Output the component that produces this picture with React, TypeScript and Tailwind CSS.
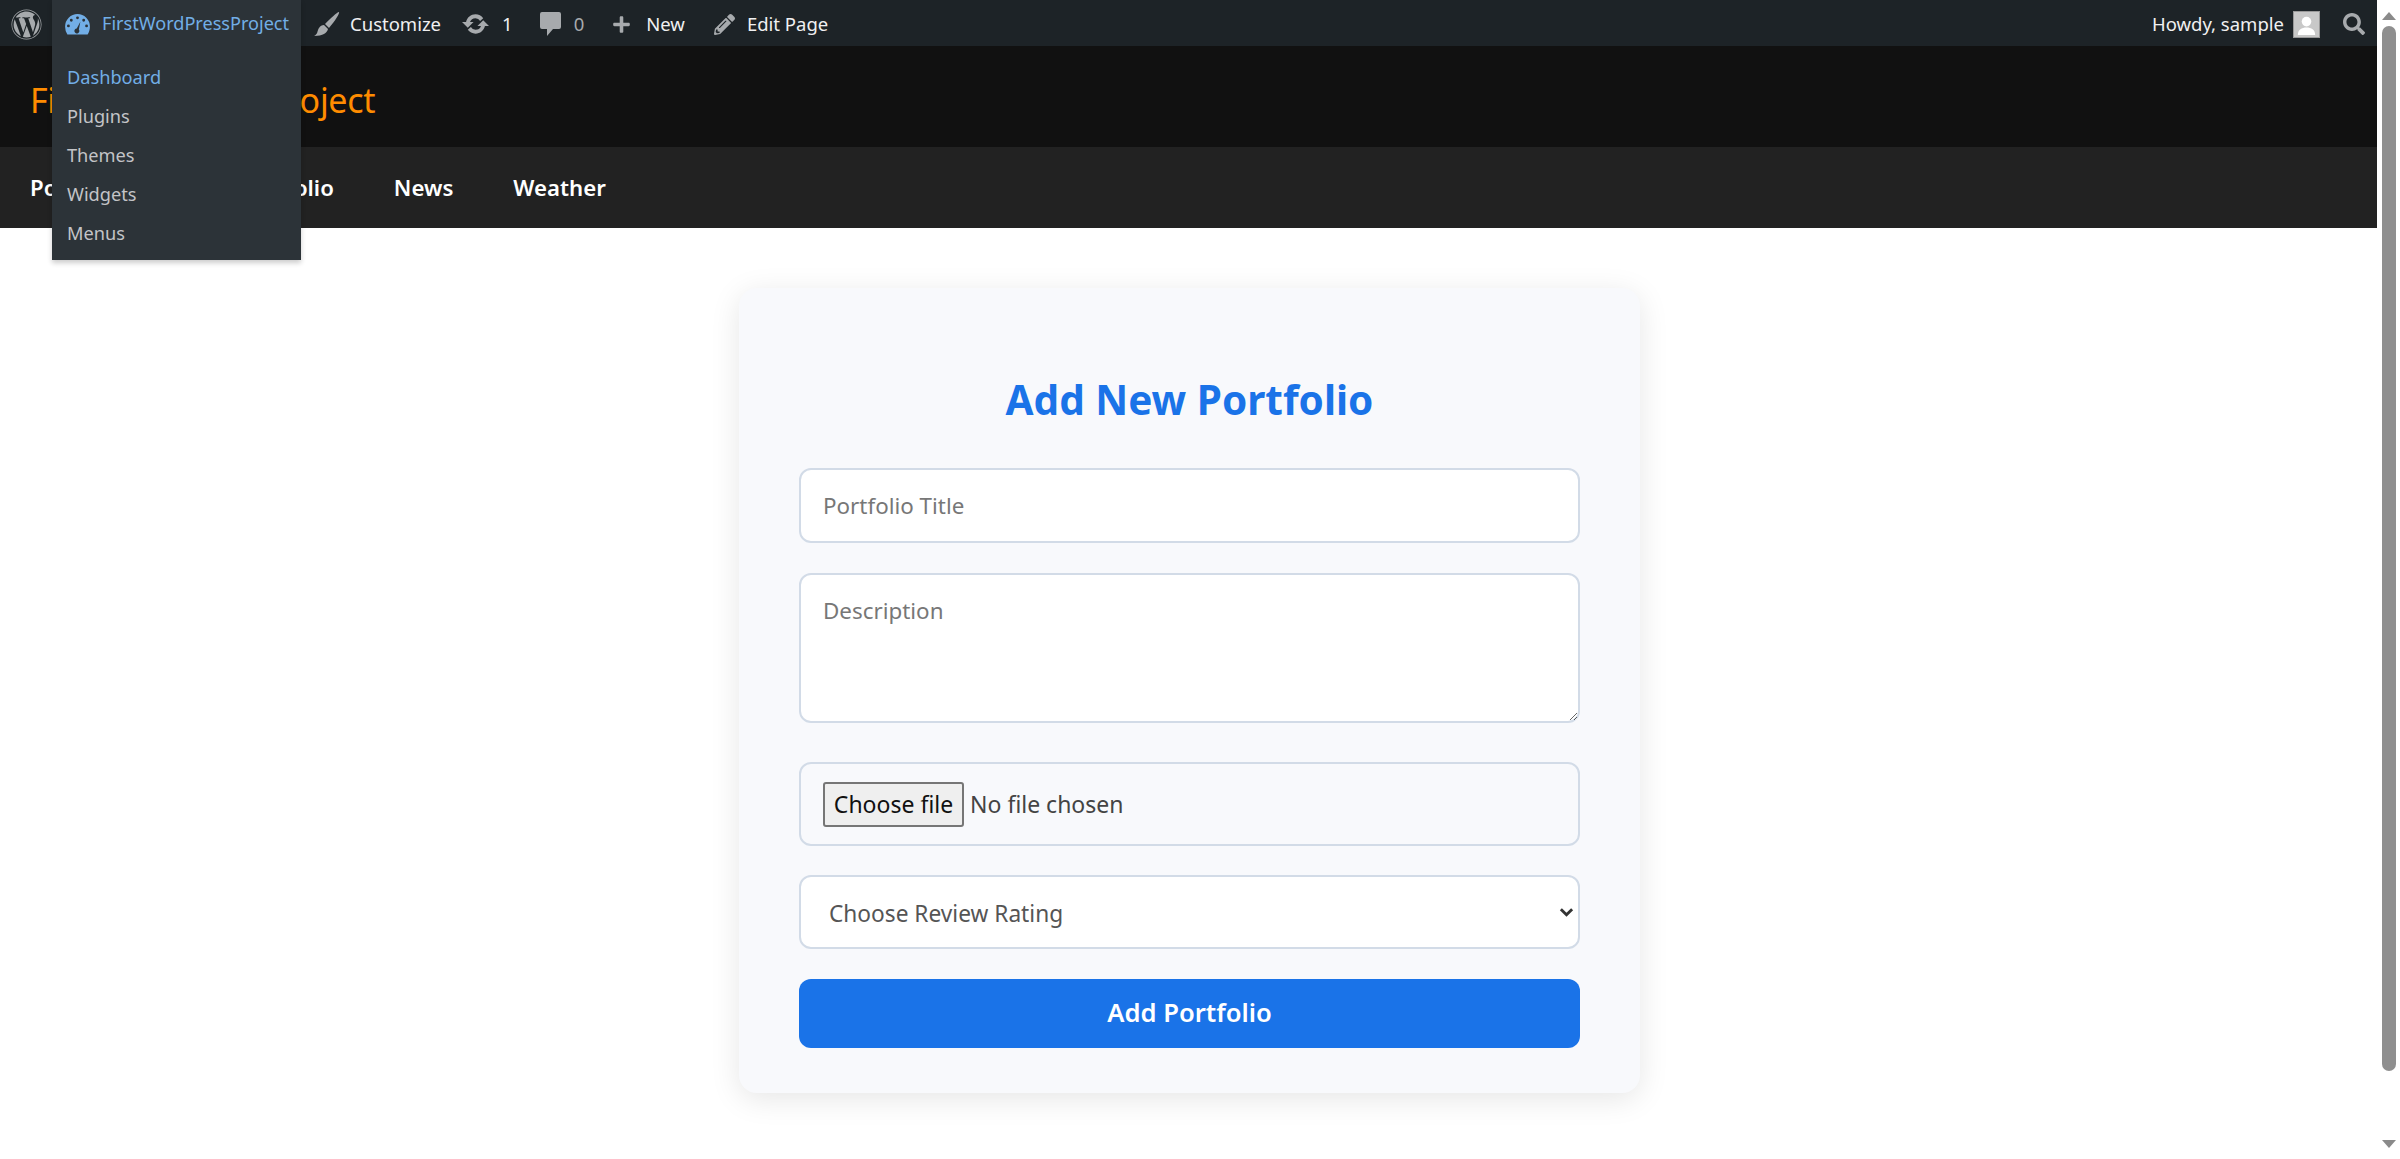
import { FaWordpress, FaSearch, FaPencilAlt, FaPlus } from "react-icons/fa";

const font = "font-['Noto_Sans','Open_Sans',sans-serif]";

const subMenu = ["Dashboard", "Plugins", "Themes", "Widgets", "Menus"];

const GaugeIcon = () => (
  <svg viewBox="0 0 26 22" className="w-[25px] h-[21px]">
    <path
      fill="#72aee6"
      fillRule="evenodd"
      d="M13 0a13 13 0 0 1 13 13c0 3-.8 6-2.4 8.500h-21.200A15 15 0 0 1 0 13 13 13 0 0 1 13 0zM13 2.500a1.500 1.500 0 1 0 0 3 1.500 1.500 0 0 0 0-3zM6.500 5a1.500 1.500 0 1 0 0 3 1.500 1.500 0 0 0 0-3zM19.500 5a1.500 1.500 0 1 0 0 3 1.500 1.500 0 0 0 0-3zM3.500 11a1.500 1.500 0 1 0 0 3 1.500 1.500 0 0 0 0-3zM22.500 11a1.500 1.500 0 1 0 0 3 1.500 1.500 0 0 0 0-3zM16 8l-3.800 7.200a2.600 2.600 0 1 0 2.200 1z"
    />
  </svg>
);

const BrushIcon = () => (
  <svg viewBox="0 0 27 26" className="w-[27px] h-[26px]">
    <path fill="#a7aaad" d="M26 1c1 1-4 9-10 16l-4-4C17 8 24 1 26 1zM11 14l4 4c-1 4-5 7-14 7 4-2 3-5 5-8 1-2 3-3 5-3z" />
  </svg>
);

const UpdateIcon = () => (
  <svg viewBox="0 0 28 22" className="w-[27px] h-[22px]">
    <path
      fill="#a7aaad"
      d="M14 1c3.300 0 6.200 1.600 8 4l-3.200 3a6 6 0 0 0-4.800-3 6 6 0 0 0-5.700 4H12l-6 6-6-6h4.200C5.200 4.500 9.200 1 14 1zM22 7l6 6h-4.200C22.800 17.500 18.800 21 14 21c-3.300 0-6.200-1.600-8-4l3.200-3a6 6 0 0 0 4.800 3 6 6 0 0 0 5.700-4H16z"
    />
  </svg>
);

const CommentIcon = () => (
  <svg viewBox="0 0 21 24" className="w-[21px] h-[24px]">
    <path fill="#a7aaad" d="M2 0h17a2 2 0 0 1 2 2v13a2 2 0 0 1-2 2h-6l-6 7v-7H2a2 2 0 0 1-2-2V2a2 2 0 0 1 2-2z" />
  </svg>
);

const AdminBar = () => (
  <div className="relative z-10 h-[46px] pt-[2px] bg-[#1d2327] flex items-center text-[18.500px] text-[#f0f0f1]">
    <div className="w-[52px] flex justify-center">
      <FaWordpress className="w-[31px] h-[31px] text-[#a7aaad]" />
    </div>

    {/* site menu, open */}
    <div className="absolute left-[52px] top-0 w-[249px] bg-[#2c3338] shadow-[0_3px_5px_rgba(0,0,0,0.2)]">
      <div className="h-[46px] pt-[2px] flex items-center pl-[13px] gap-[12px] text-[18.100px] text-[#72aee6]">
        <GaugeIcon />
        <span>FirstWordPressProject</span>
      </div>
      <ul className="pt-[12px] pb-[7px]">
        {subMenu.map((item, i) => (
          <li
            key={item}
            className={`h-[39px] flex items-center pl-[15px] text-[18.200px] ${i === 0 ? "text-[#72aee6]" : "text-[#c3c4c7]"}`}
          >
            {item}
          </li>
        ))}
      </ul>
    </div>

    <div className="ml-[261px] flex items-center">
      <BrushIcon />
      <span className="ml-[10px]">Customize</span>
      <span className="ml-[21px]"><UpdateIcon /></span>
      <span className="ml-[13px]">1</span>
      <span className="ml-[27px]"><CommentIcon /></span>
      <span className="ml-[13px] text-[#a7aaad]">0</span>
      <FaPlus className="ml-[28px] w-[19px] h-[19px] text-[#a7aaad]" />
      <span className="ml-[15px]">New</span>
      <FaPencilAlt className="ml-[29px] w-[21px] h-[21px] text-[#a7aaad]" />
      <span className="ml-[12px]">Edit Page</span>
    </div>

    <div className="ml-auto flex items-center">
      <span>Howdy, sample</span>
      <div className="ml-[9px] w-[27px] h-[27px] bg-[#c8c8c8] border border-[#999] flex items-end justify-center overflow-hidden">
        <svg viewBox="0 0 26 26" className="w-[25px] h-[25px]">
          <circle cx="13" cy="10" r="5" fill="#fff" />
          <path fill="#fff" d="M4 24c0-6 4-8 9-8s9 2 9 8z" />
        </svg>
      </div>
      <FaSearch className="ml-[23px] mr-[12px] w-[22px] h-[22px] text-[#a7aaad]" />
    </div>
  </div>
);

const Scrollbar = () => (
  <div className="w-[23px] h-full bg-white flex flex-col items-center">
    <div className="mt-[12px] w-0 h-0 border-x-[7px] border-x-transparent border-b-[8px] border-b-[#8a8a8a]" />
    <div className="mt-[6px] h-[1045px] w-[14px] rounded-full bg-[#8f8f8f]" />
    <div className="mt-[69px] w-0 h-0 border-x-[7px] border-x-transparent border-t-[8px] border-t-[#8a8a8a]" />
  </div>
);

const PortfolioForm = () => (
  <form className="w-[901px] ml-[2px] mt-[60px] px-[60px] pt-[85px] pb-[45px] bg-[#f8f9fc] rounded-[18px] shadow-[0_6px_30px_rgba(0,0,0,0.1)] flex flex-col">
    <h2 className="text-center text-[40.500px] leading-[54px] font-bold text-[#1a73e8]">Add New Portfolio</h2>
    <input
      type="text"
      placeholder="Portfolio Title"
      className="mt-[41px] h-[75px] px-[22px] bg-white border-2 border-[#d2dbe7] rounded-[12px] text-[22.400px] outline-none placeholder:text-[#777]"
    />
    <textarea
      placeholder="Description"
      className="mt-[30px] h-[150px] px-[22px] py-[20px] bg-white border-2 border-[#d2dbe7] rounded-[12px] text-[22.400px] leading-[32px] outline-none placeholder:text-[#777]"
    />
    <div className="mt-[39px] h-[84px] px-[22px] border-2 border-[#d2dbe7] rounded-[12px] flex items-center text-[23px] text-[#444]">
      <button type="button" className="h-[45px] w-[141px] bg-[#efefef] border-2 border-[#767676] rounded-[3px] text-[#111]">
        Choose file
      </button>
      <span className="ml-[6px]">No file chosen</span>
    </div>
    <div className="relative mt-[29px]">
      <select className="w-full h-[74px] pt-[4px] pl-[28px] pr-[8px] appearance-none bg-white border-2 border-[#d2dbe7] rounded-[12px] text-[22.700px] text-[#555] outline-none">
        <option>Choose Review Rating</option>
      </select>
      <svg viewBox="0 0 16 10" className="absolute right-[6px] top-[32px] w-[15px] h-[10px] pointer-events-none">
        <path d="M2 2l6 6 6-6" fill="none" stroke="#333" strokeWidth="3" />
      </svg>
    </div>
    <button type="button" className="mt-[30px] h-[69px] bg-[#1a73e8] rounded-[12px] text-white text-[25.600px] font-semibold">
      Add Portfolio
    </button>
  </form>
);

export default function App() {
  return (
    <div className={`${font} flex h-screen overflow-hidden bg-white`}>
      <div className="flex-1 min-w-0 flex flex-col">
        <AdminBar />
        <header className="h-[101px] bg-[#111] flex items-center pt-[7px] px-[30px]">
          <h1 className="text-[34px] tracking-[-0.3px] text-[#ff8c00]">FirstWordPressProject</h1>
        </header>
        <nav className="h-[81px] bg-[#222] flex items-center gap-[60px] px-[30px] text-[22.200px] font-semibold text-white">
          <a className="mr-[17px]">Portfolio</a>
          <a>My Portfolio</a>
          <a>News</a>
          <a>Weather</a>
        </nav>
        <main className="flex justify-center">
          <PortfolioForm />
        </main>
      </div>
      <Scrollbar />
    </div>
  );
}
